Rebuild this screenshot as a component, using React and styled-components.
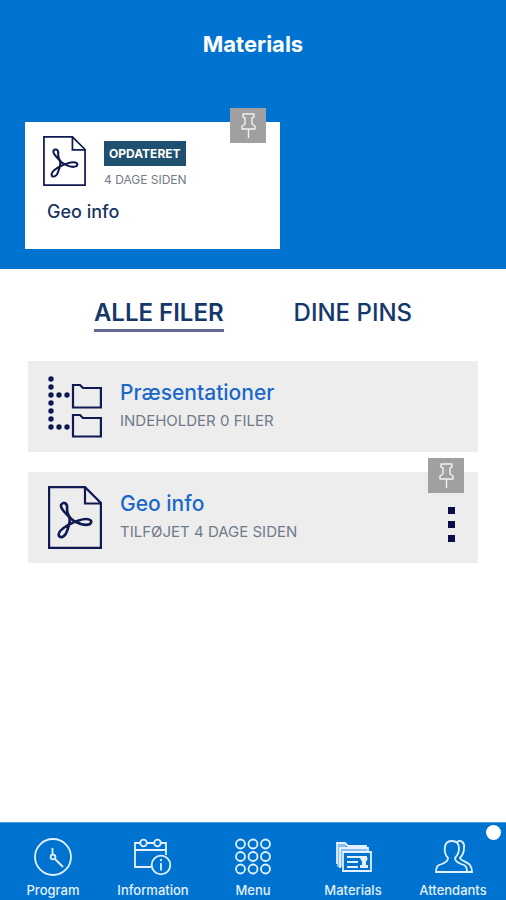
import React, { useState } from "react";
import styled, { createGlobalStyle } from "styled-components";

const BLUE = "#0073d0";
const NAVY = "#101a52";

const GlobalStyle = createGlobalStyle`
  *, *::before, *::after { box-sizing: border-box; }
  body { margin: 0; background: #fff; font-family: Inter, "Open Sans", sans-serif; }
  button { font: inherit; color: inherit; background: none; border: 0; padding: 0; margin: 0; cursor: pointer; }
  h1, h2, h3, p, ul { margin: 0; padding: 0; }
  ul { list-style: none; }
  svg { display: block; flex: none; }
`;

const Screen = styled.div`
  min-height: 100vh;
  display: flex;
  flex-direction: column;
`;

const Header = styled.header`
  background: ${BLUE};
  padding: 30px 25px 20px;
`;

const Title = styled.h1`
  color: #fff;
  font-size: 22px;
  line-height: 28px;
  font-weight: 700;
  text-align: center;
  margin-bottom: 64px;
`;

const FeaturedCard = styled.article`
  position: relative;
  width: 56%;
  min-height: 127px;
  background: #fff;
  padding: 14px 18px;
  color: ${NAVY};
`;

const FeaturedTop = styled.div`
  display: flex;
  gap: 18px;
`;

const FeaturedMeta = styled.div`
  display: flex;
  flex-direction: column;
  align-items: flex-start;
  gap: 6px;
  padding-top: 5px;
`;

const Badge = styled.span`
  background: #1f506f;
  color: #fff;
  font-size: 12px;
  line-height: 25px;
  font-weight: 700;
  padding: 0 5px;
`;

const Age = styled.p`
  color: #737b87;
  font-size: 12px;
  line-height: 16px;
`;

const FeaturedName = styled.h2`
  color: #1b3560;
  font-size: 18px;
  line-height: 24px;
  font-weight: 500;
  margin: 12px 0 0 4px;
`;

const PinButton = styled.button`
  position: absolute;
  top: -14px;
  right: 14px;
  width: 36px;
  height: 35px;
  display: flex;
  align-items: center;
  justify-content: center;
  background: #a0a0a0;
  color: #f2f2f2;
`;

const Main = styled.main`
  flex: 1;
  padding: 28px;
`;

const Tabs = styled.div`
  display: flex;
  justify-content: center;
  gap: 70px;
  margin-bottom: 29px;
`;

const Tab = styled.button`
  color: #14386b;
  font-size: 24px;
  line-height: 32px;
  font-weight: ${(p) => (p.$active ? 600 : 500)};
  border-bottom: 3px solid ${(p) => (p.$active ? "#626a92" : "transparent")};
`;

const FileList = styled.ul`
  display: flex;
  flex-direction: column;
  gap: 20px;
`;

const FileRow = styled.li`
  position: relative;
  display: flex;
  align-items: center;
  gap: 18px;
  min-height: 91px;
  padding: 0 18px 0 20px;
  background: #ededed;
  color: ${NAVY};
`;

const FileText = styled.div`
  flex: 1;
`;

const FileName = styled.h3`
  color: #1a67ca;
  font-size: 21px;
  line-height: 28px;
  font-weight: 500;
`;

const FileNote = styled.p`
  color: #6f7b8a;
  font-size: 15px;
  line-height: 28px;
`;

const MoreButton = styled.button`
  width: 18px;
  padding: 24px 0 10px;
  display: flex;
  flex-direction: column;
  align-items: center;
  gap: 7px;
`;

const Square = styled.span`
  width: 7px;
  height: 7px;
  background: #0b0b48;
`;

const BottomNav = styled.nav`
  position: relative;
  display: flex;
  padding: 12px 3px 0;
  min-height: 78px;
  background: ${BLUE};
  border-top: 1px solid #4f9be0;
`;

const NavItem = styled.button`
  flex: 1;
  display: flex;
  flex-direction: column;
  align-items: center;
  gap: 2px;
  color: #e2f0ff;
  font-size: 13px;
  line-height: 18px;
  font-weight: 500;
`;

const NotificationDot = styled.span`
  position: absolute;
  top: 2px;
  right: 5px;
  width: 15px;
  height: 15px;
  border-radius: 50%;
  background: #fff;
`;

function PdfIcon({ width, height }) {
  return (
    <svg width={width} height={height} viewBox="0 0 54 63" fill="none" stroke="currentColor" strokeWidth="2.2" aria-hidden="true">
      <path d="M1.100 1.100H37L52.900 17V61.900H1.100Z" />
      <path d="M37 1V17.500H53" />
      <path
        d="M21 31C18 27 12 23 13 19C15 15 20 17 19 23C19 29 23 34 28 36C32 38 38 40 42 38C45 35 42 33 38 33C32 33 26 36 20 39C15 42 9 46 11 50C14 53 18 49 19 45C21 40 23 35 21 31Z"
        strokeLinejoin="round"
        strokeWidth="2.600"
      />
    </svg>
  );
}

function FolderTreeIcon() {
  const dots = [
    ...[3, 11, 19, 27, 35, 43, 51].map((y) => [3, y]),
    [11, 19], [19, 19], [11, 51], [19, 51],
  ];
  return (
    <svg width="54" height="62" viewBox="0 0 54 62" fill="none" aria-hidden="true">
      {dots.map(([x, y]) => (
        <circle key={`${x}-${y}`} cx={x} cy={y} r="2.7" fill="currentColor" />
      ))}
      <g stroke="currentColor" strokeWidth="2.2">
        <path d="M25 9H32L35 12H52.900V31.500H25Z" />
        <path d="M25 39H32L35 42H52.900V60.500H25Z" />
      </g>
    </svg>
  );
}

function PinIcon() {
  return (
    <svg width="15" height="26" viewBox="0 0 15 26" fill="none" stroke="currentColor" strokeWidth="1.4" strokeLinejoin="round" aria-hidden="true">
      <path d="M2 1H13V4L11 5V11L14 13V16H1V13L4 11V5L2 4Z" />
      <path d="M7.5 16V25" />
    </svg>
  );
}

function NavIcon({ children }) {
  return (
    <svg width="40" height="44" viewBox="0 0 40 44" fill="none" stroke="currentColor" strokeWidth="1.8" aria-hidden="true">
      {children}
    </svg>
  );
}

const navEntries = [
  {
    label: "Program",
    icon: (
      <NavIcon>
        <circle cx="20" cy="22" r="18" />
        <circle cx="20" cy="22" r="2.4" />
        <path d="M19.5 13V19.5M22 24L30 32" />
      </NavIcon>
    ),
  },
  {
    label: "Information",
    icon: (
      <NavIcon>
        <path d="M7 8H2V32H18M14 8H21M28 8H33V20M2 15H33" />
        <circle cx="10.5" cy="8" r="3.3" />
        <circle cx="24.5" cy="8" r="3.3" />
        <circle cx="28" cy="30" r="9.3" />
        <path d="M28 28V35.5M28 24V26.2" />
      </NavIcon>
    ),
  },
  {
    label: "Menu",
    icon: (
      <NavIcon>
        {[9, 21.5, 34].map((y) =>
          [7.5, 20, 32.5].map((x) => <circle key={`${x}-${y}`} cx={x} cy={y} r="4.5" />)
        )}
      </NavIcon>
    ),
  },
  {
    label: "Materials",
    icon: (
      <NavIcon>
        <path d="M4 29V8H12L15 11H33V14M7 33V13H35V17" />
        <path d="M4 9H12L14 13H34V17H9V32H4Z" fill="currentColor" fillOpacity="0.6" stroke="none" />
        <path d="M10 36V17H38V36Z" />
        <path d="M14 22H34M14 27H25M14 32H25" />
        <path d="M27 23H35L33 27V30H35V33H27V30H29V27Z" fill="currentColor" stroke="none" />
      </NavIcon>
    ),
  },
  {
    label: "Attendants",
    icon: (
      <NavIcon>
        <path d="M3 37C3 31 5 30 9 29C13 27 15 26 15 23C12 20 11 17 12 11C13 7 16 6 19 6C24 6 26 9 26 13C26 18 24 21 22 23C22 26 24 27 28 29C32 30 34 31 34 37Z" />
        <path d="M24 7C28 4 32 8 31 13C31 18 29 21 27 23C28 26 35 27 37 30C39 33 39 35 39 37H34" />
      </NavIcon>
    ),
  },
];

export default function App() {
  const [tab, setTab] = useState("all");
  return (
    <Screen>
      <GlobalStyle />
      <Header>
        <Title>Materials</Title>
        <FeaturedCard>
          <FeaturedTop>
            <PdfIcon width={43} height={50} />
            <FeaturedMeta>
              <Badge>OPDATERET</Badge>
              <Age>4 DAGE SIDEN</Age>
            </FeaturedMeta>
          </FeaturedTop>
          <FeaturedName>Geo info</FeaturedName>
          <PinButton type="button" aria-label="Pin Geo info">
            <PinIcon />
          </PinButton>
        </FeaturedCard>
      </Header>
      <Main>
        <Tabs role="tablist">
          <Tab type="button" role="tab" aria-selected={tab === "all"} $active={tab === "all"} onClick={() => setTab("all")}>
            ALLE FILER
          </Tab>
          <Tab type="button" role="tab" aria-selected={tab === "pins"} $active={tab === "pins"} onClick={() => setTab("pins")}>
            DINE PINS
          </Tab>
        </Tabs>
        <FileList>
          <FileRow>
            <FolderTreeIcon />
            <FileText>
              <FileName>Præsentationer</FileName>
              <FileNote>INDEHOLDER 0 FILER</FileNote>
            </FileText>
          </FileRow>
          <FileRow>
            <PdfIcon width={54} height={63} />
            <FileText>
              <FileName>Geo info</FileName>
              <FileNote>TILFØJET 4 DAGE SIDEN</FileNote>
            </FileText>
            <MoreButton type="button" aria-label="More options">
              <Square />
              <Square />
              <Square />
            </MoreButton>
            <PinButton type="button" aria-label="Pin Geo info">
              <PinIcon />
            </PinButton>
          </FileRow>
        </FileList>
      </Main>
      <BottomNav>
        {navEntries.map(({ label, icon }) => (
          <NavItem key={label} type="button">
            {icon}
            {label}
          </NavItem>
        ))}
        <NotificationDot />
      </BottomNav>
    </Screen>
  );
}
